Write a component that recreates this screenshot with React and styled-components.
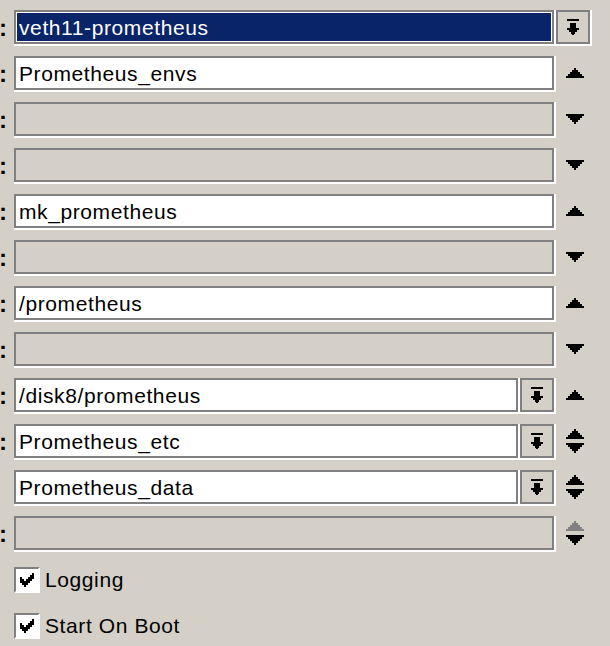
import React from "react";
import styled, { createGlobalStyle, css } from "styled-components";

const GlobalStyle = createGlobalStyle`
  html, body {
    margin: 0;
    padding: 0;
    background: #d4d0c8;
  }
  body {
    font-family: "Liberation Sans", Arial, sans-serif;
    overflow: hidden;
  }
`;

const Panel = styled.div`
  width: 592px;
  padding-top: 10px;
  display: flex;
  flex-direction: column;
  gap: 10px;
  font-family: "Liberation Sans", Arial, sans-serif;
  font-size: 21px;
  letter-spacing: 0.6px;
  color: #000;
`;

const Row = styled.div`
  display: grid;
  grid-template-columns: 14px 1fr 36px;
  height: 36px;
`;

const Colon = styled.div`
  padding-top: 3px;
  line-height: 30px;
  font-size: 24px;
  font-weight: bold;
  margin-left: -1px;
`;

const FieldGroup = styled.div`
  display: flex;
  min-width: 0;
`;

const sunken = css`
  box-sizing: border-box;
  height: 34px;
  border: 2px solid #808080;
  box-shadow: 2px 0 0 #fff, 0 2px 0 #fff, 2px 2px 0 #fff;
  margin-right: 2px;
`;

const Field = styled.div`
  ${sunken};
  flex: 1;
  min-width: 0;
  padding-left: 3px;
  padding-top: 1px;
  line-height: 30px;
  white-space: nowrap;
  overflow: hidden;
  background: ${(p) => (p.$selected ? "#0a246a" : p.$filled ? "#fff" : "#d4d0c8")};
  color: ${(p) => (p.$selected ? "#fff" : "#000")};
  ${(p) =>
    p.$selected &&
    css`
      box-shadow: inset 0 0 0 1px #fff, 2px 0 0 #fff, 0 2px 0 #fff, 2px 2px 0 #fff;
    `}
`;

const DropButton = styled.div`
  ${sunken};
  width: 34px;
  flex: none;
  background: #d4d0c8;
  display: flex;
  align-items: center;
  justify-content: center;
`;

const ArrowCell = styled.div`
  height: 34px;
  display: flex;
  flex-direction: column;
  align-items: center;
  justify-content: center;
  gap: 4px;
  padding-left: 1px;
`;

const CheckRow = styled.label`
  display: flex;
  align-items: center;
  height: 36px;
  padding-left: 14px;
  gap: 5px;
`;

const CheckBox = styled.span`
  box-sizing: border-box;
  width: 26px;
  height: 26px;
  border-top: 2px solid #808080;
  border-left: 2px solid #808080;
  border-right: 2px solid #fff;
  border-bottom: 2px solid #fff;
  background: #fff;
  display: flex;
  align-items: center;
  justify-content: center;
`;

const CheckText = styled.span`
  line-height: 26px;
`;

const DropGlyph = () => (
  <svg width="12" height="16" viewBox="0 0 12 16" shapeRendering="crispEdges">
    <rect x="0" y="0" width="12" height="2" fill="#000" />
    <rect x="3" y="4" width="6" height="5" fill="#000" />
    <rect x="0" y="9" width="12" height="2" fill="#000" />
    <rect x="2" y="11" width="8" height="2" fill="#000" />
    <rect x="4" y="13" width="4" height="2" fill="#000" />
    <rect x="5" y="15" width="2" height="1" fill="#000" />
  </svg>
);

const Tri = ({ dir, color = "#000" }) => {
  const rows = [
    [8, 2],
    [6, 6],
    [4, 10],
    [2, 14],
    [0, 18],
  ];
  return (
    <svg width="18" height="10" viewBox="0 0 18 10" shapeRendering="crispEdges">
      {rows.map(([x, w], i) => (
        <rect
          key={i}
          x={x}
          y={dir === "up" ? i * 2 : 8 - i * 2}
          width={w}
          height="2"
          fill={color}
        />
      ))}
    </svg>
  );
};

const CheckMark = () => {
  const px = [
    [6, 0],
    [5, 1], [6, 1],
    [0, 2], [4, 2], [5, 2], [6, 2],
    [0, 3], [1, 3], [3, 3], [4, 3], [5, 3],
    [0, 4], [1, 4], [2, 4], [3, 4], [4, 4],
    [1, 5], [2, 5], [3, 5],
    [2, 6],
  ];
  return (
    <svg width="14" height="14" viewBox="0 0 14 14" shapeRendering="crispEdges">
      {px.map(([x, y], i) => (
        <rect key={i} x={x * 2} y={y * 2} width="2" height="2" fill="#000" />
      ))}
    </svg>
  );
};

const rows = [
  { text: "veth11-prometheus", selected: true, drop: "side" },
  { text: "Prometheus_envs", arrow: "up" },
  { text: "", arrow: "down" },
  { text: "", arrow: "down" },
  { text: "mk_prometheus", arrow: "up" },
  { text: "", arrow: "down" },
  { text: "/prometheus", arrow: "up" },
  { text: "", arrow: "down" },
  { text: "/disk8/prometheus", drop: "inline", arrow: "up" },
  { text: "Prometheus_etc", drop: "inline", arrow: "both" },
  { text: "Prometheus_data", drop: "inline", arrow: "both", noColon: true },
  { text: "", arrow: "both", upDisabled: true },
];

const Arrows = ({ kind, upDisabled }) => (
  <ArrowCell>
    {(kind === "up" || kind === "both") && (
      <Tri dir="up" color={upDisabled ? "#808080" : "#000"} />
    )}
    {(kind === "down" || kind === "both") && <Tri dir="down" />}
  </ArrowCell>
);

export default function App() {
  return (
    <>
      <GlobalStyle />
      <Panel>
        {rows.map((r, i) => (
          <Row key={i}>
            <Colon>{r.noColon ? "" : ":"}</Colon>
            <FieldGroup>
              <Field $selected={r.selected} $filled={!!r.text}>
                {r.text}
              </Field>
              {r.drop === "inline" && (
                <DropButton>
                  <DropGlyph />
                </DropButton>
              )}
            </FieldGroup>
            {r.drop === "side" ? (
              <DropButton>
                <DropGlyph />
              </DropButton>
            ) : (
              <Arrows kind={r.arrow} upDisabled={r.upDisabled} />
            )}
          </Row>
        ))}
        <CheckRow>
          <CheckBox>
            <CheckMark />
          </CheckBox>
          <CheckText>Logging</CheckText>
        </CheckRow>
        <CheckRow>
          <CheckBox>
            <CheckMark />
          </CheckBox>
          <CheckText>Start On Boot</CheckText>
        </CheckRow>
      </Panel>
    </>
  );
}
